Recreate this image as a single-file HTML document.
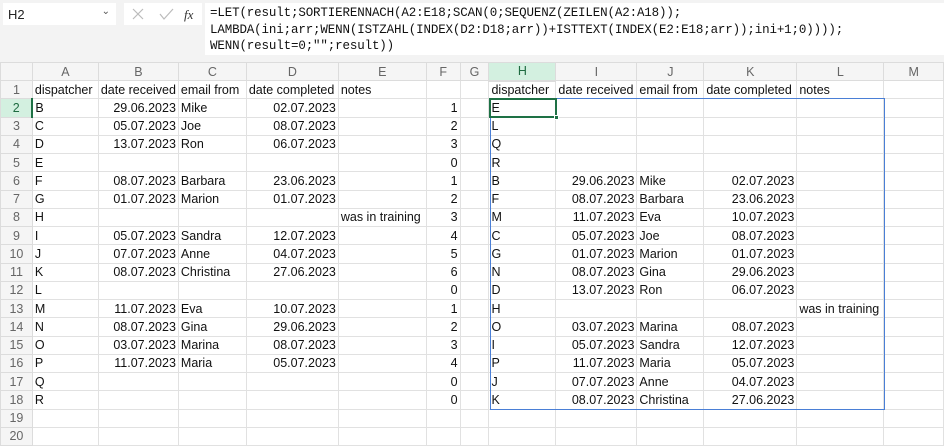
<!DOCTYPE html>
<html><head><meta charset="utf-8"><style>
*{margin:0;padding:0;box-sizing:border-box}
body{width:944px;height:446px;overflow:hidden;background:#fff;font-family:"Liberation Sans",Arial,sans-serif;position:relative}
.top{position:absolute;left:0;top:0;width:944px;height:62px;background:#f3f3f3}
.nb{position:absolute;left:3px;top:3px;width:113px;height:22px;background:#fff;font-size:13px;padding:4px 5px;color:#222}
.nb span{position:absolute;right:6px;top:3px;font-size:10px;color:#555}
.ic{position:absolute;left:124px;top:3px;width:78px;height:22px;background:#fff}
.fb{position:absolute;left:205px;top:3px;width:739px;height:52px;background:#fff;font-family:"Liberation Mono",monospace;font-size:12.5px;letter-spacing:-0.14px;line-height:16.5px;padding:2px 0 0 5px;color:#111;white-space:pre;overflow:hidden}
table{position:absolute;left:0;top:62px;border-collapse:collapse;table-layout:fixed;font-size:12.5px}
td{height:18.25px;border:1px solid #e1e1e1;padding:0 2px;white-space:nowrap;overflow:visible;color:#111;line-height:16px}
tr.h td{height:18px;background:#f5f5f5;color:#666;text-align:center;border-color:#dcdcdc}
td.r{background:#f5f5f5;color:#666;text-align:center;border-color:#dcdcdc}
.n{text-align:right}
td.sel{background:#d3f0e0!important;color:#1e6b41!important;border-bottom:2px solid #1e7145}
td.rs{background:#d3f0e0!important;color:#1e6b41!important;border-right:2px solid #1e7145}
.blue{position:absolute;left:490px;top:98px;width:395px;height:312px;border:1px solid #4a7fd6;pointer-events:none}
.grn{position:absolute;left:489px;top:98px;width:68px;height:20px;border:2px solid #1e7145}
.grn i{position:absolute;right:-4px;bottom:-4px;width:5px;height:5px;background:#1e7145;border:1px solid #fff}
</style></head><body>
<div class="top">
<div class="nb">H2<span>&#8964;</span></div>
<div class="ic"><svg width="78" height="22"><path d="M9 6l10 10M19 6l-10 10" stroke="#bbb" stroke-width="1.2"/><path d="M36 11l4 5 9-10" stroke="#bbb" stroke-width="1.2" fill="none"/><text x="60" y="16" font-family="Liberation Serif" font-style="italic" font-size="13" fill="#333">fx</text></svg></div>
<div class="fb">=LET(result;SORTIERENNACH(A2:E18;SCAN(0;SEQUENZ(ZEILEN(A2:A18));
LAMBDA(ini;arr;WENN(ISTZAHL(INDEX(D2:D18;arr))+ISTTEXT(INDEX(E2:E18;arr));ini+1;0))));
WENN(result=0;"";result))</div>
</div>
<table>
<colgroup><col style="width:32px"><col style="width:66px"><col style="width:80px"><col style="width:68px"><col style="width:92px"><col style="width:88px"><col style="width:34px"><col style="width:29px"><col style="width:67px"><col style="width:81px"><col style="width:67px"><col style="width:93px"><col style="width:87px"><col style="width:60px"></colgroup>
<tr class="h"><td style="background:#f5f5f5"></td><td>A</td><td>B</td><td>C</td><td>D</td><td>E</td><td>F</td><td>G</td><td class="sel">H</td><td>I</td><td>J</td><td>K</td><td>L</td><td>M</td></tr>
<tr><td class="r">1</td><td>dispatcher</td><td>date received</td><td>email from</td><td>date completed</td><td>notes</td><td></td><td></td><td>dispatcher</td><td>date received</td><td>email from</td><td>date completed</td><td>notes</td><td></td></tr>
<tr><td class="r rs">2</td><td>B</td><td class="n">29.06.2023</td><td>Mike</td><td class="n">02.07.2023</td><td></td><td class="n">1</td><td></td><td>E</td><td></td><td></td><td></td><td></td><td></td></tr>
<tr><td class="r">3</td><td>C</td><td class="n">05.07.2023</td><td>Joe</td><td class="n">08.07.2023</td><td></td><td class="n">2</td><td></td><td>L</td><td></td><td></td><td></td><td></td><td></td></tr>
<tr><td class="r">4</td><td>D</td><td class="n">13.07.2023</td><td>Ron</td><td class="n">06.07.2023</td><td></td><td class="n">3</td><td></td><td>Q</td><td></td><td></td><td></td><td></td><td></td></tr>
<tr><td class="r">5</td><td>E</td><td></td><td></td><td></td><td></td><td class="n">0</td><td></td><td>R</td><td></td><td></td><td></td><td></td><td></td></tr>
<tr><td class="r">6</td><td>F</td><td class="n">08.07.2023</td><td>Barbara</td><td class="n">23.06.2023</td><td></td><td class="n">1</td><td></td><td>B</td><td class="n">29.06.2023</td><td>Mike</td><td class="n">02.07.2023</td><td></td><td></td></tr>
<tr><td class="r">7</td><td>G</td><td class="n">01.07.2023</td><td>Marion</td><td class="n">01.07.2023</td><td></td><td class="n">2</td><td></td><td>F</td><td class="n">08.07.2023</td><td>Barbara</td><td class="n">23.06.2023</td><td></td><td></td></tr>
<tr><td class="r">8</td><td>H</td><td></td><td></td><td></td><td>was in training</td><td class="n">3</td><td></td><td>M</td><td class="n">11.07.2023</td><td>Eva</td><td class="n">10.07.2023</td><td></td><td></td></tr>
<tr><td class="r">9</td><td>I</td><td class="n">05.07.2023</td><td>Sandra</td><td class="n">12.07.2023</td><td></td><td class="n">4</td><td></td><td>C</td><td class="n">05.07.2023</td><td>Joe</td><td class="n">08.07.2023</td><td></td><td></td></tr>
<tr><td class="r">10</td><td>J</td><td class="n">07.07.2023</td><td>Anne</td><td class="n">04.07.2023</td><td></td><td class="n">5</td><td></td><td>G</td><td class="n">01.07.2023</td><td>Marion</td><td class="n">01.07.2023</td><td></td><td></td></tr>
<tr><td class="r">11</td><td>K</td><td class="n">08.07.2023</td><td>Christina</td><td class="n">27.06.2023</td><td></td><td class="n">6</td><td></td><td>N</td><td class="n">08.07.2023</td><td>Gina</td><td class="n">29.06.2023</td><td></td><td></td></tr>
<tr><td class="r">12</td><td>L</td><td></td><td></td><td></td><td></td><td class="n">0</td><td></td><td>D</td><td class="n">13.07.2023</td><td>Ron</td><td class="n">06.07.2023</td><td></td><td></td></tr>
<tr><td class="r">13</td><td>M</td><td class="n">11.07.2023</td><td>Eva</td><td class="n">10.07.2023</td><td></td><td class="n">1</td><td></td><td>H</td><td></td><td></td><td></td><td>was in training</td><td></td></tr>
<tr><td class="r">14</td><td>N</td><td class="n">08.07.2023</td><td>Gina</td><td class="n">29.06.2023</td><td></td><td class="n">2</td><td></td><td>O</td><td class="n">03.07.2023</td><td>Marina</td><td class="n">08.07.2023</td><td></td><td></td></tr>
<tr><td class="r">15</td><td>O</td><td class="n">03.07.2023</td><td>Marina</td><td class="n">08.07.2023</td><td></td><td class="n">3</td><td></td><td>I</td><td class="n">05.07.2023</td><td>Sandra</td><td class="n">12.07.2023</td><td></td><td></td></tr>
<tr><td class="r">16</td><td>P</td><td class="n">11.07.2023</td><td>Maria</td><td class="n">05.07.2023</td><td></td><td class="n">4</td><td></td><td>P</td><td class="n">11.07.2023</td><td>Maria</td><td class="n">05.07.2023</td><td></td><td></td></tr>
<tr><td class="r">17</td><td>Q</td><td></td><td></td><td></td><td></td><td class="n">0</td><td></td><td>J</td><td class="n">07.07.2023</td><td>Anne</td><td class="n">04.07.2023</td><td></td><td></td></tr>
<tr><td class="r">18</td><td>R</td><td></td><td></td><td></td><td></td><td class="n">0</td><td></td><td>K</td><td class="n">08.07.2023</td><td>Christina</td><td class="n">27.06.2023</td><td></td><td></td></tr>
<tr><td class="r">19</td><td></td><td></td><td></td><td></td><td></td><td></td><td></td><td></td><td></td><td></td><td></td><td></td><td></td></tr>
<tr><td class="r">20</td><td></td><td></td><td></td><td></td><td></td><td></td><td></td><td></td><td></td><td></td><td></td><td></td><td></td></tr>
</table>
<div class="blue"></div>
<div class="grn"><i></i></div>
</body></html>
